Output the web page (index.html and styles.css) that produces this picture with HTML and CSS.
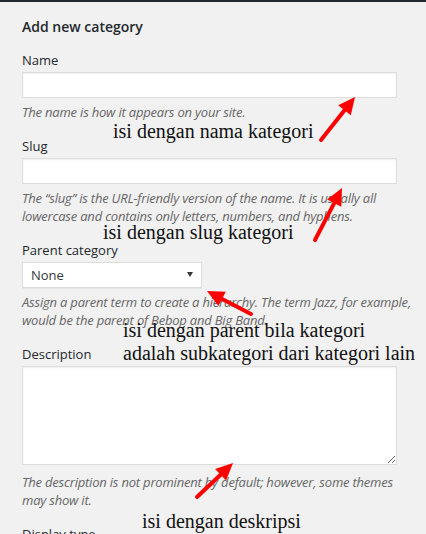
FILE: index.html
```html
<!DOCTYPE html>
<html lang="en">
<head>
<meta charset="utf-8">
<title>Add new category</title>
<link rel="stylesheet" href="styles.css">
</head>
<body>
<div class="page">
  <div class="topbar"></div>
  <form class="form">
    <h2 class="title">Add new category</h2>

    <div class="field field-first">
      <label class="label">Name</label>
      <input class="input" type="text">
      <p class="help">The name is how it appears on your site.</p>
    </div>

    <div class="field">
      <label class="label">Slug</label>
      <input class="input" type="text">
      <p class="help">The “slug” is the URL-friendly version of the name. It is usually all lowercase and contains only letters, numbers, and hyphens.</p>
    </div>

    <div class="field">
      <label class="label">Parent category</label>
      <div class="select"><span>None</span><span class="caret"></span></div>
      <p class="help">Assign a parent term to create a hierarchy. The term Jazz, for example, would be the parent of Bebop and Big Band.</p>
    </div>

    <div class="field">
      <label class="label">Description</label>
      <textarea class="textarea"></textarea>
      <p class="help help-area">The description is not prominent by default; however, some themes may show it.</p>
    </div>

    <div class="field">
      <label class="label">Display type</label>
    </div>
  </form>

  <div class="note note-1">isi dengan nama kategori</div>
  <div class="note note-2">isi dengan slug kategori</div>
  <div class="note note-3">isi dengan parent bila kategori<br>adalah subkategori dari kategori lain</div>
  <div class="note note-4">isi dengan deskripsi</div>

  <svg class="arrows" width="426" height="534" viewBox="0 0 426 534">
    <g stroke="#ff0000" stroke-width="4" stroke-linecap="round" fill="none">
      <line x1="321" y1="140" x2="344.5" y2="110.3"/>
      <line x1="315" y1="240" x2="334.2" y2="203.1"/>
      <line x1="251" y1="314" x2="222.1" y2="298.9"/>
      <line x1="197" y1="497" x2="220.6" y2="474.7"/>
    </g>
    <g fill="#ff0000">
      <polygon points="355,97 350.8,115.3 338.2,105.3"/>
      <polygon points="342,188 341.3,206.8 327.1,199.4"/>
      <polygon points="207,291 225.8,291.8 218.4,306"/>
      <polygon points="233,463 226.1,480.5 215.1,468.9"/>
    </g>
  </svg>
</div>
</body>
</html>
```

FILE: styles.css
```css
html, body {
  margin: 0;
  padding: 0;
  background: #f1f1f1;
}

.page {
  position: relative;
  width: 426px;
  height: 534px;
  overflow: hidden;
  font-family: "Open Sans", "Noto Sans", sans-serif;
  color: #23282d;
}

.topbar {
  height: 2px;
  background: #23282d;
}

.form {
  padding-left: 22px;
  width: 396px;
}

.title {
  margin: 15px 0 0;
  font-size: 14px;
  font-weight: 600;
  line-height: 20px;
  color: #23282d;
}

.field {
  margin-top: 15px;
}

.field-first {
  margin-top: 14px;
}

.label {
  display: block;
  font-size: 13px;
  line-height: 18px;
  color: #23282d;
}

.input {
  display: block;
  box-sizing: border-box;
  width: 375px;
  height: 26px;
  margin: 3px 0 0;
  padding: 0 8px;
  border: 1px solid #dddddd;
  background: #ffffff;
  box-shadow: inset 0 1px 2px rgba(0, 0, 0, 0.07);
  font: inherit;
  outline: none;
}

.select {
  box-sizing: border-box;
  width: 180px;
  height: 26px;
  margin-top: 3px;
  padding: 0 7px 0 8px;
  border: 1px solid #dddddd;
  background: #ffffff;
  box-shadow: 0 1px 1px rgba(0, 0, 0, 0.04);
  display: flex;
  align-items: center;
  justify-content: space-between;
  font-size: 13px;
  color: #32373c;
}

.caret {
  width: 0;
  height: 0;
  border-left: 3px solid transparent;
  border-right: 3px solid transparent;
  border-top: 5px solid #32373c;
  margin-right: 1px;
}

.textarea {
  display: block;
  box-sizing: border-box;
  width: 375px;
  height: 99px;
  margin: 3px 0 0;
  border: 1px solid #dddddd;
  background: #ffffff;
  box-shadow: inset 0 1px 2px rgba(0, 0, 0, 0.07);
  font: inherit;
  outline: none;
}

.help {
  margin: 5px 0 0;
  font-size: 13px;
  line-height: 18.5px;
  letter-spacing: -0.2px;
  font-style: italic;
  color: #666666;
}

.help-area {
  margin-top: 8px;
}

.note {
  position: absolute;
  font-family: "Liberation Serif", "Times New Roman", serif;
  font-size: 20px;
  line-height: 23px;
  color: #111111;
  white-space: nowrap;
}

.note-1 { left: 113px; top: 120px; }
.note-2 { left: 103px; top: 221px; }
.note-3 { left: 123px; top: 319px; }
.note-4 { left: 142px; top: 510px; }

.arrows {
  position: absolute;
  left: 0;
  top: 0;
  pointer-events: none;
}
```
